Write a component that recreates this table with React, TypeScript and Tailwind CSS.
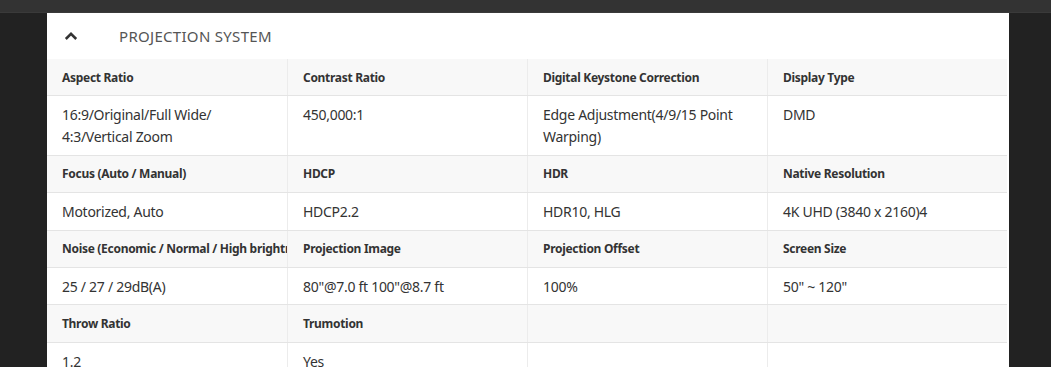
import React from 'react'

// Spec table for the projector "PROJECTION SYSTEM" accordion section.

type Spec = { label: string; value: React.ReactNode }

const SPECS: Spec[][] = [
  [
    { label: 'Aspect Ratio', value: <>16:9/Original/Full Wide/<br />4:3/Vertical Zoom</> },
    { label: 'Contrast Ratio', value: '450,000:1' },
    { label: 'Digital Keystone Correction', value: 'Edge Adjustment(4/9/15 Point Warping)' },
    { label: 'Display Type', value: 'DMD' },
  ],
  [
    { label: 'Focus (Auto / Manual)', value: 'Motorized, Auto' },
    { label: 'HDCP', value: 'HDCP2.2' },
    { label: 'HDR', value: 'HDR10, HLG' },
    { label: 'Native Resolution', value: '4K UHD (3840 x 2160)4' },
  ],
  [
    { label: 'Noise (Economic / Normal / High brightness)', value: '25 / 27 / 29dB(A)' },
    { label: 'Projection Image', value: '80"@7.0 ft 100"@8.7 ft' },
    { label: 'Projection Offset', value: '100%' },
    { label: 'Screen Size', value: '50" ~ 120"' },
  ],
  [
    { label: 'Throw Ratio', value: '1.2' },
    { label: 'Trumotion', value: 'Yes' },
    { label: '', value: '' },
    { label: '', value: '' },
  ],
]

function ChevronUp() {
  return (
    <svg width="14" height="14" viewBox="0 0 14 14" aria-hidden="true">
      <path d="M1.8 10 L7 4.8 L12.2 10" fill="none" stroke="#333" strokeWidth="2.5" />
    </svg>
  )
}

export default function App() {
  return (
    <div
      className="min-h-[367px] w-[1051px] overflow-hidden bg-[#222222]"
      style={{ fontFamily: '"Noto Sans", "Open Sans", sans-serif' }}
    >
      {/* top bar */}
      <div className="h-[13px] border-b border-[#3a3a3a] bg-[#333333]" />

      <section className="ml-[47px] w-[962px] bg-white">
        {/* accordion header */}
        <div className="flex h-[46px] items-center">
          <span className="ml-[17px] flex w-[14px] justify-center">
            <ChevronUp />
          </span>
          <h2 className="ml-[41px] text-[15px] leading-none tracking-[0.02em] text-[#555555]">
            PROJECTION SYSTEM
          </h2>
        </div>

        {/* spec grid */}
        <div className="w-[960px]">
          {SPECS.map((row, i) => (
            <React.Fragment key={i}>
              <div className="grid grid-cols-4 border-b border-[#e4e4e4] bg-[#f8f8f8]">
                {row.map((s, j) => (
                  <div
                    key={j}
                    className={
                      'h-[36.3px] overflow-hidden whitespace-nowrap pl-[15px] pt-[9.5px] text-[12px] font-bold leading-[17px] tracking-[-0.025em] text-[#333333] ' +
                      (j > 0 ? 'border-l border-[#ececec]' : '')
                    }
                  >
                    {s.label}
                  </div>
                ))}
              </div>
              <div className="grid grid-cols-4 border-b border-[#e4e4e4] bg-white">
                {row.map((s, j) => (
                  <div
                    key={j}
                    className={
                      'pb-[6.5px] pl-[15px] pr-[15px] pt-[8px] text-[14px] leading-[22px] tracking-[-0.02em] text-[#333333] ' +
                      (j > 0 ? 'border-l border-[#ececec]' : '')
                    }
                  >
                    {s.value}
                  </div>
                ))}
              </div>
            </React.Fragment>
          ))}
        </div>
      </section>
    </div>
  )
}
